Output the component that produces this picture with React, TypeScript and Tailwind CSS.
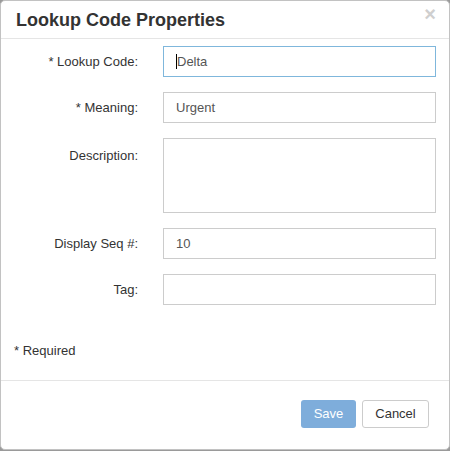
import React from "react";

const font = { fontFamily: '"Liberation Sans", Arial, sans-serif' };

function Row({ label, value, focused, tall }: { label: string; value?: string; focused?: boolean; tall?: boolean }) {
  return (
    <div className={`flex ${tall ? "items-start" : "items-center"} mb-[15px]`}>
      <div className={`w-[137px] text-right text-[13px] text-[#333] ${tall ? "pt-[8px]" : ""}`}>{label}</div>
      <div
        className={`ml-[25px] w-[273px] ${tall ? "h-[75px]" : "h-[31px]"} border ${
          focused ? "border-[#7fb7dc]" : "border-[#cccccc]"
        } bg-white flex ${tall ? "items-start" : "items-center"} pl-[12px] text-[13px] text-[#555]`}
      >
        {focused && <span className="inline-block w-[1px] h-[15px] bg-black mr-[0px]" />}
        {value}
      </div>
    </div>
  );
}

export default function App() {
  return (
    <div className="w-[450px] h-[451px] bg-[#9a9a9a]" style={font}>
      <div className="w-[450px] h-[450px] bg-white rounded-[5px] border border-[#c2c2c2] flex flex-col overflow-hidden">
        <div className="h-[38px] border-b border-[#e5e5e5] flex items-center justify-between pl-[15px] pr-[13px] shrink-0">
          <div className="text-[18px] font-bold text-[#333] pt-[1px]">Lookup Code Properties</div>
          <div className="text-[20px] font-bold text-[#cfcfcf] leading-none -mt-[12px]">×</div>
        </div>
        <div className="pt-[7px]">
          <Row label="* Lookup Code:" value="Delta" focused />
          <Row label="* Meaning:" value="Urgent" />
          <Row label="Description:" tall />
          <Row label="Display Seq #:" value="10" />
          <Row label="Tag:" />
          <div className="mt-[37px] pl-[13px] text-[13px] text-[#333] leading-[18px] h-[18px]">* Required</div>
        </div>
        <div className="mt-[20px] border-t border-[#e5e5e5] flex-1 flex justify-end items-start pt-[19px] pr-[20px] gap-[6px]">
          <div className="w-[55px] h-[28px] rounded-[3px] bg-[#7eaddb] text-white text-[13px] flex items-center justify-center">Save</div>
          <div className="w-[67px] h-[28px] rounded-[3px] bg-white border border-[#cccccc] text-[#333] text-[13px] flex items-center justify-center">Cancel</div>
        </div>
      </div>
    </div>
  );
}
